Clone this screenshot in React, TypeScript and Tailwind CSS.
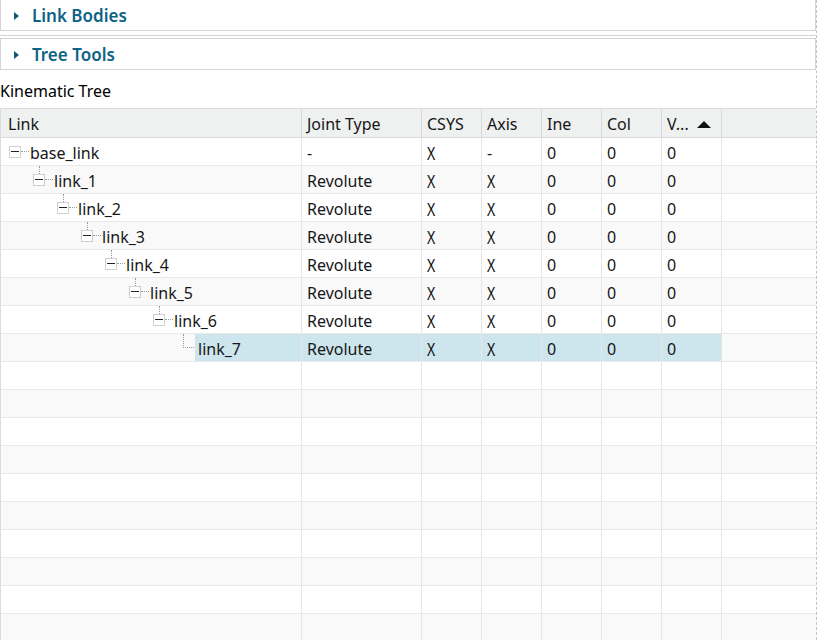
import type { ReactNode } from "react";

type Row = {
  name: string;
  depth: number;
  leaf?: boolean;
  joint: string;
  csys: boolean;
  axis: boolean;
  ine: string;
  col: string;
  vis: string;
};

const rows: Row[] = [
  { name: "base_link", depth: 0, joint: "-", csys: true, axis: false, ine: "0", col: "0", vis: "0" },
  { name: "link_1", depth: 1, joint: "Revolute", csys: true, axis: true, ine: "0", col: "0", vis: "0" },
  { name: "link_2", depth: 2, joint: "Revolute", csys: true, axis: true, ine: "0", col: "0", vis: "0" },
  { name: "link_3", depth: 3, joint: "Revolute", csys: true, axis: true, ine: "0", col: "0", vis: "0" },
  { name: "link_4", depth: 4, joint: "Revolute", csys: true, axis: true, ine: "0", col: "0", vis: "0" },
  { name: "link_5", depth: 5, joint: "Revolute", csys: true, axis: true, ine: "0", col: "0", vis: "0" },
  { name: "link_6", depth: 6, joint: "Revolute", csys: true, axis: true, ine: "0", col: "0", vis: "0" },
  { name: "link_7", depth: 7, leaf: true, joint: "Revolute", csys: true, axis: true, ine: "0", col: "0", vis: "0" },
];

const EMPTY_ROWS = 10;
const SELECTED = 7;

const cols = "grid grid-cols-[301px_120px_60px_60px_60px_60px_60px_1fr]";

function Panel({ title, className }: { title: string; className?: string }) {
  return (
    <div className={`flex h-[32px] items-center border border-[#d4d4d4] pt-[2px] pl-[13px] ${className ?? ""}`}>
      <svg width="6" height="10" viewBox="0 0 6 10" className="mr-[12px]">
        <path d="M0 1 L5 5 L0 9 Z" fill="#0d5a78" />
      </svg>
      <span className="text-[17px] font-semibold text-[#0d6384]">{title}</span>
    </div>
  );
}

function Cell({ children, sel, last }: { children?: ReactNode; sel?: boolean; last?: boolean }) {
  return (
    <div
      className={`flex items-center pt-[2px] pl-[5px] ${last ? "" : "border-r border-[#e6e6e6]"} ${
        sel ? "bg-[#cde5ec]" : ""
      }`}
    >
      {children}
    </div>
  );
}

// narrow cross used for the checked flags
function Mark({ on }: { on: boolean }) {
  if (!on) return <>-</>;
  return <span className="inline-block origin-left scale-x-[0.78] text-[18px] leading-none text-[#111]">X</span>;
}

// minus box of an expanded tree node
function Toggle() {
  return (
    <span className="relative flex h-[12px] w-[12px] items-center justify-center border border-[#d0d0d0] bg-white">
      <span className="h-px w-[8px] bg-[#222]" />
    </span>
  );
}

function TreeCell({ row, sel }: { row: Row; sel: boolean }) {
  const indent = 8 + row.depth * 24;
  return (
    <div className="relative flex items-center border-r border-[#e6e6e6]">
      {row.depth > 0 && (
        <span
          className="absolute top-0 border-l border-dotted border-[#8aa0a0]"
          style={{ left: indent + 6, height: row.leaf ? 14 : 8 }}
        />
      )}
      {row.leaf ? (
        <span
          className="absolute top-[13px] border-t border-dotted border-[#8aa0a0]"
          style={{ left: indent + 6, width: 11 }}
        />
      ) : (
        <span className="absolute flex items-center" style={{ left: indent }}>
          <Toggle />
          <span className="h-px w-[8px] border-t border-dotted border-[#8aa0a0]" />
        </span>
      )}
      <div
        className={`flex h-full items-center pt-[2px] pl-[3px] ${sel ? "bg-[#cde5ec]" : ""}`}
        style={{ marginLeft: indent + 18, flex: 1 }}
      >
        {row.name}
      </div>
    </div>
  );
}

export default function App() {
  return (
    <div className="h-[640px] w-[817px] overflow-hidden border-r border-dashed border-[#c4c4c4] bg-white font-['Noto_Sans','Open_Sans',sans-serif] text-[16px] text-[#161616]">
      <Panel title="Link Bodies" className="-mt-px" />
      <div className="mt-[4px] border-t border-[#d4d4d4]" />
      <Panel title="Tree Tools" className="mt-[2px]" />
      <div className="flex h-[38px] items-center pt-[4px] pl-0 text-[16px] text-black">Kinematic Tree</div>

      <div className="border-l border-[#dcdcdc]">
        {/* header */}
        <div className={`${cols} h-[30px] border-y border-[#dadada] bg-[#eff0f0]`}>
          <div className="flex items-center border-r border-[#dadada] pt-[2px] pl-[7px]">Link</div>
          <div className="flex items-center border-r border-[#dadada] pt-[2px] pl-[5px]">Joint Type</div>
          <div className="flex items-center border-r border-[#dadada] pt-[2px] pl-[5px]">CSYS</div>
          <div className="flex items-center border-r border-[#dadada] pt-[2px] pl-[5px]">Axis</div>
          <div className="flex items-center border-r border-[#dadada] pt-[2px] pl-[5px]">Ine</div>
          <div className="flex items-center border-r border-[#dadada] pt-[2px] pl-[5px]">Col</div>
          <div className="flex items-center border-r border-[#dadada] pt-[2px] pl-[5px]">
            V...
            <svg width="14" height="8" viewBox="0 0 14 8" className="ml-[8px]">
              <path d="M0 8 L7 1 L14 8 Z" fill="#111" />
            </svg>
          </div>
          <div />
        </div>

        {/* tree rows */}
        {rows.map((r, i) => {
          const sel = i === SELECTED;
          return (
            <div
              key={r.name}
              className={`${cols} h-[28px] border-b border-[#e8e8e8] ${i % 2 ? "bg-[#f9f9f9]" : "bg-white"}`}
            >
              <TreeCell row={r} sel={sel} />
              <Cell sel={sel}>{r.joint}</Cell>
              <Cell sel={sel}>
                <Mark on={r.csys} />
              </Cell>
              <Cell sel={sel}>
                <Mark on={r.axis} />
              </Cell>
              <Cell sel={sel}>{r.ine}</Cell>
              <Cell sel={sel}>{r.col}</Cell>
              <Cell sel={sel}>{r.vis}</Cell>
              <Cell last />
            </div>
          );
        })}

        {/* filler rows */}
        {Array.from({ length: EMPTY_ROWS }).map((_, j) => (
          <div
            key={j}
            className={`${cols} h-[28px] border-b border-[#e8e8e8] ${(j + rows.length) % 2 ? "bg-[#f9f9f9]" : "bg-white"}`}
          >
            <Cell />
            <Cell />
            <Cell />
            <Cell />
            <Cell />
            <Cell />
            <Cell />
            <Cell last />
          </div>
        ))}
      </div>
    </div>
  );
}
